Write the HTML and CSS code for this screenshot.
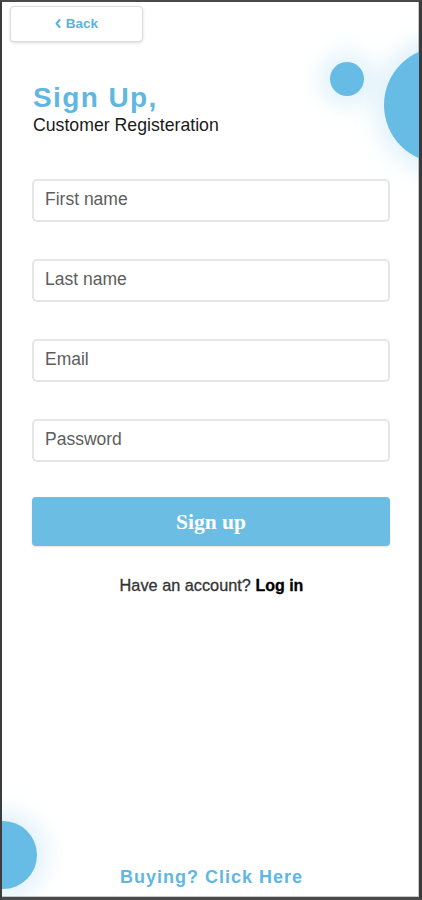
FILE: index.html
```html
<!DOCTYPE html>
<html lang="en">
<head>
<meta charset="utf-8">
<title>Sign Up</title>
<link rel="stylesheet" href="styles.css">
</head>
<body>
<div class="frame">
  <span class="blob blob-small"></span>
  <span class="blob blob-right"></span>
  <span class="blob blob-left"></span>

  <button class="back-btn" type="button">
    <svg class="chev" width="6" height="9" viewBox="0 0 6 9"><polyline points="4.5,1 1.5,4.5 4.5,8" fill="none" stroke="#5ab3df" stroke-width="2" stroke-linecap="round" stroke-linejoin="round"/></svg>
    <span>Back</span>
  </button>

  <div class="heading">
    <h1 class="title">Sign Up,</h1>
    <p class="subtitle">Customer Registeration</p>
  </div>

  <form class="form">
    <input class="field" type="text" placeholder="First name">
    <input class="field" type="text" placeholder="Last name">
    <input class="field" type="email" placeholder="Email">
    <input class="field" type="password" placeholder="Password">
    <button class="submit" type="button">Sign up</button>
  </form>

  <p class="login">Have an account? <a class="login-link" href="#">Log in</a></p>

  <a class="buying" href="#">Buying? Click Here</a>
</div>
</body>
</html>
```
FILE: styles.css
```css
* { box-sizing: border-box; }

html, body {
  margin: 0;
  padding: 0;
  background: #ffffff;
}

.frame {
  position: relative;
  width: 422px;
  height: 900px;
  overflow: hidden;
  background: #fff;
  border-top: 2px solid #4a4a4a;
  border-left: 2px solid #3c3c3c;
  border-right: 3px solid #3a3a3a;
  border-bottom: 3px solid #4a4a4a;
  box-shadow: inset -1px -1px 0 #c8c8c8;
  display: flex;
  flex-direction: column;
  font-family: "Liberation Sans", Arial, sans-serif;
}

.blob {
  position: absolute;
  border-radius: 50%;
  background: #66bce4;
  box-shadow: 0 0 22px 10px rgba(120, 195, 232, 0.22);
}
.blob-small {
  width: 34px;
  height: 34px;
  left: 328px;
  top: 60px;
}
.blob-right {
  width: 116px;
  height: 116px;
  left: 382px;
  top: 45px;
}
.blob-left {
  width: 68px;
  height: 68px;
  left: -33px;
  top: 819px;
}

.back-btn {
  align-self: flex-start;
  margin: 4px 0 0 8px;
  width: 133px;
  height: 36px;
  background: #fff;
  border: 1px solid #dcdcdc;
  border-radius: 4px;
  box-shadow: 0 1px 3px rgba(0, 0, 0, 0.14);
  display: flex;
  align-items: center;
  justify-content: center;
  gap: 5px;
  padding: 0 0 2px 0;
  font-family: "Liberation Sans", Arial, sans-serif;
  font-weight: bold;
  font-size: 13.5px;
  color: #5ab3df;
  cursor: pointer;
}
.chev { display: block; margin-top: 1px; }

.heading {
  margin: 40px 0 0 31px;
  position: relative;
}
.title {
  margin: 0;
  font-size: 28px;
  line-height: 32px;
  font-weight: bold;
  letter-spacing: 1.4px;
  color: #5fb7e2;
}
.subtitle {
  margin: 1px 0 0 0;
  font-size: 17.7px;
  line-height: 20px;
  color: #1a1a1a;
}

.form {
  margin: 44px 0 0 30px;
  width: 358px;
  display: flex;
  flex-direction: column;
  gap: 37px;
  position: relative;
}
.field {
  display: block;
  width: 358px;
  height: 43px;
  border: 2px solid #e6e6e6;
  border-radius: 5px;
  padding: 0 0 2px 11px;
  font-family: "Liberation Sans", Arial, sans-serif;
  font-size: 17.5px;
  color: #333;
  background: #fff;
  outline: none;
}
.field::placeholder { color: #5d5d5d; }

.submit {
  margin-top: -2px;
  width: 358px;
  height: 49px;
  border: none;
  border-radius: 4px;
  background: #6bbde4;
  box-shadow: 0 1px 2px rgba(0, 0, 0, 0.12);
  color: #fff;
  font-family: "Liberation Serif", "Times New Roman", serif;
  font-weight: bold;
  font-size: 21.5px;
  padding: 2px 0 0 0;
  cursor: pointer;
}

.login {
  margin: 29px 0 0 0;
  text-align: center;
  font-size: 16.3px;
  line-height: 20px;
  font-weight: normal;
  color: #333;
  padding-left: 2px;
  -webkit-text-stroke: 0.3px #333;
}
.login-link {
  color: #000;
  text-decoration: none;
  font-size: 16px;
  font-weight: bold;
  -webkit-text-stroke: 0.3px #000;
}

.buying {
  margin-top: auto;
  margin-bottom: 9px;
  align-self: center;
  font-size: 18px;
  line-height: 22px;
  font-weight: bold;
  letter-spacing: 1px;
  color: #5fb7e2;
  text-decoration: none;
  position: relative;
  padding-left: 2px;
}
```
